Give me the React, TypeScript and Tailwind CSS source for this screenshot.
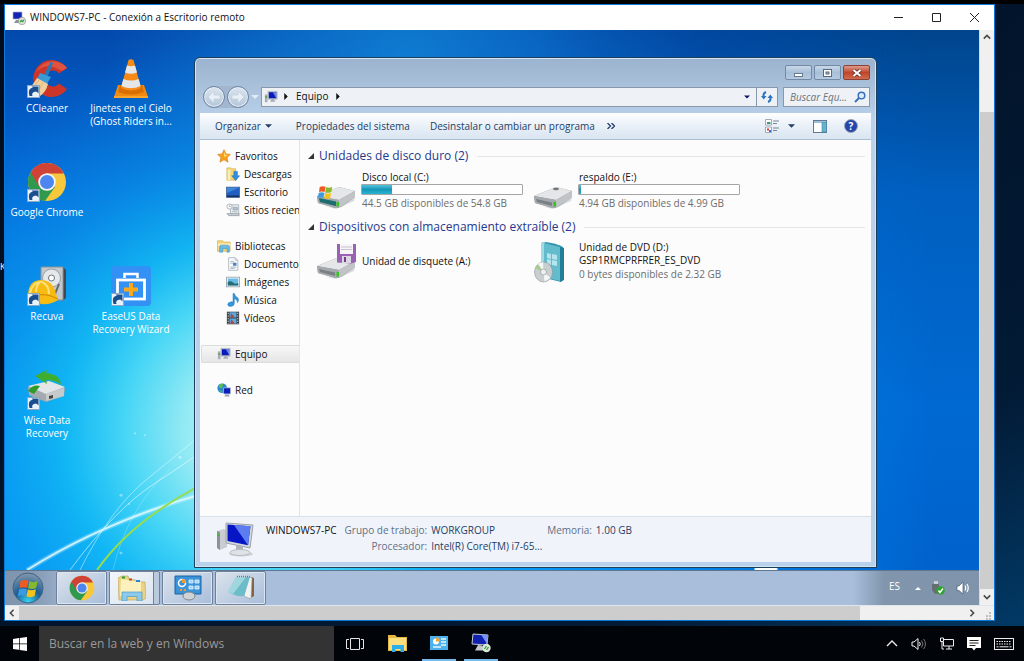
import React from "react";

type IconProps = { className?: string };

const ShortcutMark = () => (
  <g>
    <rect x="0.5" y="27.5" width="12" height="12" fill="#e9f2fb" stroke="#8da9c2" />
    <path d="M2.500 38c-1.500-5.500 0-8 3.500-8l-1.500-1.500h7v7L9.800 33.800c-3.500-.5-5.300 1.200-4.300 4.200z" fill="#1b4e8c" />
  </g>
);

const ChromeShapes = () => (
  <g>
    <circle cx="20" cy="20" r="19" fill="#f7c83c" />
    <path d="M20 20 3.500 10.500A19 19 0 0 0 18 38.900L28 25z" fill="#2f9a4e" />
    <path d="M20 11.500h16.900A19 19 0 0 0 3.600 10.400L12.500 25z" fill="#cf4236" />
    <circle cx="20" cy="20" r="8.800" fill="#f4f4f4" />
    <circle cx="20" cy="20" r="7" fill="#4c86ee" />
  </g>
);

const WinFlag = () => (
  <g>
    <path d="M1 3q4-2.500 8.500-.5L8 10Q4 8.500 0 10z" fill="#ee5a22" />
    <path d="M10.500 3q4 1.800 8.500-.3L17.500 10q-4 2-8.500.3z" fill="#86b92c" />
    <path d="M-.3 11.200q4-1.600 8 0L6.200 18.500q-4-1.800-8-.2z" fill="#3d9ae0" />
    <path d="M8.800 11.600q4 1.600 8.500-.3L15.800 18.800q-4 1.800-8.500-.1z" fill="#f8c21c" />
  </g>
);

const CCleanerIcon = () => (
  <svg viewBox="0 0 40 40" className="size-10">
    <path d="M40 10A18.500 18.500 0 1 0 40 31L32 25.500A8 8 0 1 1 32 15.500z" fill="#cd3528" />
    <path d="M40 10A18.500 18.500 0 0 0 9 14q10-11 26-1z" fill="#e05341" />
    <path d="m23.500 4 2.500 1-6 15-4-1z" fill="#2a78b8" />
    <path d="m13 15 11 4-4 7-10-5z" fill="#3a9ad6" />
    <path d="M10 20 4 29l9 9q6-4 8-12z" fill="#f1cf9c" />
    <path d="m12 22-6 8m10-6-5 11" stroke="#e0b57a" fill="none" />
    <ShortcutMark />
  </svg>
);

const ConeIcon = () => (
  <svg viewBox="0 0 40 40" className="size-10">
    <path d="M7 27h26l4 12H3z" fill="#f08a10" />
    <path d="M9 27h22l2 7q-13 5-26 0z" fill="#d96f04" />
    <path d="M17.500 2q2.500-1.500 5 0l7.500 28q-10 5-20 0z" fill="#f58a16" />
    <path d="m16 7.500-2 7q6 2.500 12 0l-2-7q-4 1.500-8 0zM12.300 21l-1.900 7q9.500 4.500 19.200 0l-1.900-7q-7.700 3-15.400 0z" fill="#e4e6e8" />
    <path d="M3 38h34v2H3z" fill="#f9a52c" />
  </svg>
);

const ChromeIcon = () => (
  <svg viewBox="0 0 40 40" className="size-10">
    <ChromeShapes />
    <ShortcutMark />
  </svg>
);

const RecuvaIcon = () => (
  <svg viewBox="0 0 40 40" className="size-10">
    <path d="m36 1 3 3v28l-4 3z" fill="#42484d" />
    <path d="M14 1h22v33H14z" fill="#c3c8cc" stroke="#8b9197" />
    <circle cx="24.500" cy="12" r="9" fill="#e5e8eb" stroke="#999fa5" />
    <circle cx="24.500" cy="12" r="3" fill="#fff" stroke="#6d7278" />
    <path d="m32 18-4 10" stroke="#666" strokeWidth="2" />
    <path d="M1 28Q2 14 14 14t15 14l2 6q-7 5-17 4L1 31z" fill="#f7bb12" />
    <path d="M3 27Q5 17 13 16q-4 4-4 10m6-10q7 3 7 12" stroke="#fde27a" strokeWidth="2" fill="none" />
    <path d="M6 30q12-4 25 3" stroke="#cc8800" fill="none" />
    <ShortcutMark />
  </svg>
);

const EaseUsIcon = () => (
  <svg viewBox="0 0 40 40" className="size-10">
    <rect width="40" height="40" rx="4" fill="#3390f5" />
    <path d="M13.500 12V8h13v4" fill="none" stroke="#fff" strokeWidth="2.500" />
    <rect x="6.500" y="14" width="27" height="19" fill="none" stroke="#fff" strokeWidth="2.800" />
    <path d="M18 17h4v4.500h5v4h-5V30h-4v-4.500h-5v-4h5z" fill="#fba919" />
    <ShortcutMark />
  </svg>
);

const WiseIcon = () => (
  <svg viewBox="0 0 40 40" className="size-10">
    <path d="m1 17 22-5 15 6-1 8-18 6L2 25z" fill="#a4aaaf" />
    <path d="m1 16 21-5 16 6-19 7z" fill="#e2e6e9" />
    <path d="M19 24v7l18-5v-8z" fill="#c5cacd" />
    <path d="m22 26 4-1v3l-4 1z" fill="#444" />
    <path d="M8 6 20 0l-1 3q14 1 15 12-5-5-15-5l1 4z" fill="#3fae2d" />
    <path d="M1 21q5-7 12-5l-6 8z" fill="#2f9b28" />
    <ShortcutMark />
  </svg>
);

const Monitor = ({ className }: IconProps) => (
  <svg viewBox="0 0 16 16" className={className}>
    <path d="M1 5h3v9H1z" fill="#a9afb4" />
    <path d="M1.500 7h2v2h-2z" fill="#4ea34a" />
    <path d="M4.500 1.500h10.500v9H4.500z" fill="#c6ccd2" stroke="#9aa1a8" strokeWidth=".6" />
    <path d="M5.500 2.500H14v7H5.500z" fill="#0a1cb8" />
    <path d="M10 2.500h4v7z" fill="#6a86ea" />
    <path d="M8.500 10.500h3l1.500 3H7z" fill="#a7acb1" />
  </svg>
);

const BigMonitor = () => (
  <svg viewBox="0 0 38 36" className="h-9 w-[38px] shrink-0">
    <ellipse cx="25" cy="32" rx="12" ry="2.500" fill="#cdd3d9" />
    <path d="m1 9 7-2 3 2v16l-7 3-3-2z" fill="#c9cdd1" />
    <path d="m1 9 3 1v18l-3-2z" fill="#8c9297" />
    <path d="M1.500 12h2v2h-2z" fill="#41b436" />
    <path d="m10 1 27 2-3 23-24-5z" fill="#d2d8de" stroke="#9ba2aa" />
    <path d="m11.500 2.500 23 1.800-2.500 19-20.500-4.300z" fill="#0716c4" />
    <path d="m18 3 16.500 1.300-2.500 19z" fill="#5c7df0" />
    <path d="m20 23 7 1v5h-7z" fill="#aeb4b9" />
    <ellipse cx="24" cy="30.500" rx="10" ry="3" fill="#dfe3e6" stroke="#b8bdc2" />
  </svg>
);

const NetworkIcon = ({ className }: IconProps) => (
  <svg viewBox="0 0 16 16" className={className}>
    <circle cx="6" cy="6" r="5.500" fill="#2a86cf" />
    <path d="M2 3q3-3 5-2l-1 4-3 1zM2 8l4 1v2z" fill="#5fc046" />
    <path d="M7.500 5.500h8v7h-8z" fill="#0b1eb9" stroke="#c3cad4" strokeWidth=".8" />
    <path d="M9.500 13h4l1 2.500h-6z" fill="#9da4ab" />
  </svg>
);

const StarIcon = ({ className }: IconProps) => (
  <svg viewBox="0 0 16 16" className={className}>
    <path d="m8 .8 2.200 4.800 5.100.6-3.800 3.500 1.100 5.300L8 12.300 3.400 15l1.100-5.300L.7 6.200l5.100-.6z" fill="#f9a01b" stroke="#dd7a12" strokeWidth=".7" />
    <path d="m8 3 1.500 3.500 3 .6-4.500 2z" fill="#ffdf6b" />
  </svg>
);

const DownloadsIcon = ({ className }: IconProps) => (
  <svg viewBox="0 0 16 16" className={className}>
    <path d="M1 1h5l1 1h4v13H1z" fill="#f4d676" stroke="#d1a843" strokeWidth=".7" />
    <path d="M2 3h3v12H2z" fill="#fbeeb4" />
    <path d="M9 5h4v5h2.500L11 15.500 6.500 10H9z" fill="#2f8fdd" stroke="#1c6bb5" strokeWidth=".6" />
  </svg>
);

const DeskIcon = ({ className }: IconProps) => (
  <svg viewBox="0 0 16 16" className={className}>
    <rect x=".5" y="2.500" width="15" height="11.500" fill="#1f5fc2" stroke="#4a6b94" />
    <path d="M1 3h14l-14 6z" fill="#4088dd" />
    <path d="M1 12h14v2H1z" fill="#16315c" />
  </svg>
);

const RecentIcon = ({ className }: IconProps) => (
  <svg viewBox="0 0 16 16" className={className}>
    <path d="M4.500 2h10v12h-9z" fill="#e8ecef" stroke="#9aa3ab" strokeWidth=".8" />
    <path d="M8 5h5v3H8zm-1 5h6" fill="#b1c4d5" stroke="#8d99a5" strokeWidth=".7" />
    <circle cx="4" cy="4" r="3" fill="#f6f8fa" stroke="#98a0a8" strokeWidth=".8" />
    <path d="M4 2.500V4h1.500M1 12h14v2.500H3z" fill="#c3cad0" stroke="#868e96" strokeWidth=".6" />
  </svg>
);

const LibraryIcon = ({ className }: IconProps) => (
  <svg viewBox="0 0 16 16" className={className}>
    <path d="M.5 2h6l1 1.500h7.500V14H.5z" fill="#f3d57b" stroke="#cfa94b" strokeWidth=".7" />
    <path d="M1 5h14v3H1z" fill="#fbedb3" />
    <path d="M3 14V9q0-2 2-2h7q2 0 2 2v6h-2.500v-4h-5v4H3z" fill="#69b9e4" stroke="#3d8fc2" strokeWidth=".6" />
  </svg>
);

const DocIcon = ({ className }: IconProps) => (
  <svg viewBox="0 0 16 16" className={className}>
    <path d="M3 .8h7.500l3 3v11.400H3z" fill="#fafbfc" stroke="#9aa4ae" strokeWidth=".8" />
    <path d="M10.500.8v3h3" fill="#d5dce3" stroke="#9aa4ae" strokeWidth=".6" />
    <path d="M5 5h4M5 7h3M5 11.500h7M5 13h5" stroke="#8f9ba7" strokeWidth=".8" />
    <path d="M8 6.500h4V10H8z" fill="#4c83c6" />
  </svg>
);

const ImageIcon = ({ className }: IconProps) => (
  <svg viewBox="0 0 16 16" className={className}>
    <rect x=".5" y="2.500" width="15" height="11" fill="#f8f9fa" stroke="#9aa4ae" />
    <path d="M2 4h12v8H2z" fill="#65bde8" />
    <path d="M2 8q3-2 6 .5t6 .5v3H2z" fill="#276c73" />
  </svg>
);

const MusicIcon = ({ className }: IconProps) => (
  <svg viewBox="0 0 16 16" className={className}>
    <path d="M8 .5h1.500Q10 4 14 6q1 3-1 5 .5-3.500-3.500-4.500V12q0 3-4 3.300-3.500 0-3.500-2.300T6 10q1-.2 2 .3z" fill="#3397dc" stroke="#1b74bb" strokeWidth=".5" />
  </svg>
);

const VideoIcon = ({ className }: IconProps) => (
  <svg viewBox="0 0 16 16" className={className}>
    <path d="M1 .8h14v14.400H1z" fill="#3b3f44" />
    <path d="M4 1.500h8v6H4zM4 8.500h8v6H4z" fill="#5fa6dc" />
    <path d="m6 2.500 4 5H5zm0 7 4 5H5z" fill="#a94632" />
    <path d="M2.500 2v13M13.500 2v13" stroke="#e2e5e7" strokeDasharray="1.500 1.500" />
  </svg>
);

const DriveBody = () => (
  <g>
    <path d="M4 34q16 6 35-8l-1 4-18 8z" fill="#d8dbdd" />
    <path d="m1 25 22-9 16 4v6l-14 10-5 1L2 32z" fill="#8c9194" />
    <path d="m1 25 22-9 16 4-16 9z" fill="#e4e6e8" />
    <path d="m1 25 22 4v8h-4L2 32z" fill="#a5aaae" />
    <path d="m3 28 16 3.500V35L4 31z" fill="#7a8084" />
    <path d="M23 29 39 20v6L23 37z" fill="#c0c4c7" />
    <path d="M20.500 31h2.600v4.500h-2.600z" fill="#36c321" />
  </g>
);

const SystemDriveIcon = () => (
  <svg viewBox="0 0 40 40" className="size-10 shrink-0">
    <DriveBody />
    <path d="m3 27 17 3.500V35L4 31z" fill="#1c6d70" />
    <g transform="translate(3 14) scale(.7)">
      <WinFlag />
    </g>
  </svg>
);

const DriveIcon = () => (
  <svg viewBox="0 0 40 40" className="size-10 shrink-0">
    <DriveBody />
    <ellipse cx="23" cy="18" rx="3" ry="1.200" fill="#777" />
  </svg>
);

const FloppyIcon = () => (
  <svg viewBox="0 0 40 40" className="size-10 shrink-0">
    <DriveBody />
    <path d="M21 3h19v18l-5 1.500-14-1z" fill="#9b62b4" />
    <path d="M24 3h13v10H24z" fill="#f5f5f7" />
    <path d="M25 6h11M25 8.500h11" stroke="#c9bfd0" />
    <path d="M26 15h9v7h-9z" fill="#dcd5e2" />
    <path d="M28 16h2v5h-2z" fill="#6f3e88" />
  </svg>
);

const DvdIcon = () => (
  <svg viewBox="0 0 40 44" className="h-11 w-10 shrink-0">
    <path d="m8 2 4-1q11 1 18 5l1 32-3 3-20-5z" fill="#3193ac" />
    <path d="m8 2 4-1v36l-4-1z" fill="#9edbe6" />
    <path d="m11 2 16 4v34l-16-4z" fill="#63bccb" />
    <path d="m27 6 4 1v32l-4 2z" fill="#1f7f9c" />
    <path d="m14 12 4 1v5l-4-1zm5 1 5 1v5l-5-1zm-5 5 4 1v5l-4-1zm5 1 5 1v5l-5-1z" fill="#b5e4ec" />
    <ellipse cx="10.500" cy="31" rx="9" ry="10" fill="#c9ced0" stroke="#8e9599" strokeWidth=".6" />
    <path d="M10.500 31 4 23l6-2zM10.500 31l7 6-6 3.500z" fill="#f5f7f8" />
    <path d="M10.500 31 2 27l3-4z" fill="#a9c991" />
    <circle cx="10.500" cy="31" r="3" fill="#eef1f2" stroke="#92999d" strokeWidth=".7" />
  </svg>
);

const Chevron = ({ d, className }: { d: string; className?: string }) => (
  <svg viewBox="0 0 10 10" className={className ?? "size-[10px]"}>
    <path d={d} fill="none" stroke="#4a4a4a" strokeWidth="2" />
  </svg>
);

const Caret = ({ className }: IconProps) => (
  <svg viewBox="0 0 8 4" className={className ?? "h-1 w-2"}>
    <path d="M0 0h8L4 4z" fill="currentColor" />
  </svg>
);

const RightCaret = () => (
  <svg viewBox="0 0 4 8" className="h-[7px] w-1">
    <path d="M0 0v8l4-4z" fill="#111" />
  </svg>
);

const Wallpaper = () => (
  <svg viewBox="0 0 974 541" preserveAspectRatio="none" className="absolute inset-0 size-full">
    <defs>
      <linearGradient id="wp-base" x1="0" y1="0" x2="0" y2="1">
        <stop offset="0" stopColor="#0349ac" />
        <stop offset=".3" stopColor="#036bda" />
        <stop offset=".65" stopColor="#0492f4" />
        <stop offset="1" stopColor="#0498fc" />
      </linearGradient>
      <radialGradient id="wp-glow" gradientUnits="userSpaceOnUse" cx="260" cy="400" r="400">
        <stop offset="0" stopColor="#c8f8f4" />
        <stop offset=".2" stopColor="#94eaf4" />
        <stop offset=".35" stopColor="#48d6f6" />
        <stop offset=".5" stopColor="#14bdf4" stopOpacity=".85" />
        <stop offset=".7" stopColor="#0c9cec" stopOpacity=".5" />
        <stop offset="1" stopColor="#0b86e4" stopOpacity="0" />
      </radialGradient>
      <radialGradient id="wp-top" gradientUnits="userSpaceOnUse" cx="400" cy="30" r="300">
        <stop offset="0" stopColor="#1080d4" stopOpacity=".9" />
        <stop offset="1" stopColor="#1080d4" stopOpacity="0" />
      </radialGradient>
      <linearGradient id="wp-right" x1="0" y1="0" x2="0" y2="1">
        <stop offset="0" stopColor="#00458c" />
        <stop offset=".3" stopColor="#005fbf" />
        <stop offset=".7" stopColor="#0069d2" />
        <stop offset="1" stopColor="#0062cc" />
      </linearGradient>
      <linearGradient id="wp-fade">
        <stop offset=".55" stopColor="#fff" stopOpacity="0" />
        <stop offset=".95" stopColor="#fff" />
      </linearGradient>
      <mask id="wp-mask">
        <rect width="974" height="541" fill="url(#wp-fade)" />
      </mask>
    </defs>
    <rect width="974" height="541" fill="url(#wp-base)" />
    <rect width="974" height="541" fill="url(#wp-top)" />
    <rect width="974" height="541" fill="url(#wp-glow)" />
    <rect width="974" height="541" fill="url(#wp-right)" mask="url(#wp-mask)" />
    <g fill="none" stroke="#e9fdff">
      <path d="M22 541Q100 492 200 464" strokeWidth="5" opacity=".25" />
      <path d="M22 541Q100 492 200 464" strokeWidth="2" opacity=".8" />
      <path d="M65 541Q110 480 150 454T200 419" opacity=".6" />
      <path d="M75 541Q105 480 142 450T200 402" opacity=".5" />
      <path d="M108 541Q122 480 165 440" opacity=".25" />
    </g>
    <path d="M92 541Q128 490 200 454" fill="none" stroke="#96dc50" strokeWidth="2" />
    <g fill="#fff" opacity=".4">
      <circle cx="116" cy="466" r="1.500" />
      <circle cx="130" cy="404" r="1" />
      <circle cx="140" cy="406" r="1" />
      <circle cx="116" cy="524" r="1.500" />
      <circle cx="124" cy="475" r="1" />
      <circle cx="175" cy="428" r="1.500" />
    </g>
    <ellipse cx="761" cy="540" rx="12" ry="2" fill="#fff" />
  </svg>
);

const desktopIcons = [
  { label: ["CCleaner"], icon: <CCleanerIcon />, place: "col-start-1" },
  { label: ["Jinetes en el Cielo", "(Ghost Riders in..."], icon: <ConeIcon />, place: "col-start-2" },
  { label: ["Google Chrome"], icon: <ChromeIcon />, place: "col-start-1" },
  { label: ["Recuva"], icon: <RecuvaIcon />, place: "col-start-1" },
  { label: ["EaseUS Data", "Recovery Wizard"], icon: <EaseUsIcon />, place: "col-start-2" },
  { label: ["Wise Data", "Recovery"], icon: <WiseIcon />, place: "col-start-1" },
];

const sidebar = [
  {
    title: "Favoritos",
    Icon: StarIcon,
    items: [
      { name: "Descargas", Icon: DownloadsIcon },
      { name: "Escritorio", Icon: DeskIcon },
      { name: "Sitios recientes", Icon: RecentIcon },
    ],
  },
  {
    title: "Bibliotecas",
    Icon: LibraryIcon,
    items: [
      { name: "Documentos", Icon: DocIcon },
      { name: "Imágenes", Icon: ImageIcon },
      { name: "Música", Icon: MusicIcon },
      { name: "Vídeos", Icon: VideoIcon },
    ],
  },
  { title: "Equipo", Icon: Monitor, items: [], selected: true },
  { title: "Red", Icon: NetworkIcon, items: [] },
];

const GroupHeader = ({ children }: { children: React.ReactNode }) => (
  <h2 className="flex h-4 items-center gap-[5px] text-[12px] leading-4 text-[#26388c]">
    <svg viewBox="0 0 6 6" className="size-[6px] shrink-0">
      <path d="M6 0v6H0z" fill="#333" />
    </svg>
    <span className="whitespace-nowrap">{children}</span>
    <span className="ml-1 h-px flex-1 bg-[#e3e6e9]" />
  </h2>
);

const Capacity = ({ used }: { used: number }) => (
  <div className="h-[11px] w-[162px] rounded-[1px] border border-[#a5a5a5] bg-white">
    <div
      className="h-full bg-linear-to-b from-[#4fc3dc] via-[#1597b8] to-[#25b4d2]"
      style={{ width: `${used}%` }}
    />
  </div>
);

const Explorer = () => (
  <section className="absolute top-[27px] left-[189px] flex h-[511px] w-[683px] flex-col rounded-t-[6px] border border-[#1d3f5c] bg-linear-to-b from-[#9bb3ce] via-[#b9d1ea] via-12% to-[#b9d1ea] px-[5px] pb-[5px] shadow-[inset_0_0_0_1px_#d3e5f5]">
    <div className="flex h-[22px] items-end justify-end gap-[2px] px-px">
      <button aria-label="Minimizar" className="flex h-[15px] w-[27px] items-center justify-center rounded-[2px] border border-[#7389a5] bg-linear-to-b from-[#c9d8e8] via-[#a8bfd8] to-[#b6cbe0]">
        <svg viewBox="0 0 9 4" className="mt-1 h-1 w-[9px]"><rect x=".5" y=".5" width="8" height="3" fill="#fff" stroke="#667a91" /></svg>
      </button>
      <button aria-label="Maximizar" className="flex h-[15px] w-[27px] items-center justify-center rounded-[2px] border border-[#7389a5] bg-linear-to-b from-[#c9d8e8] via-[#a8bfd8] to-[#b6cbe0]">
        <svg viewBox="0 0 9 8" className="h-2 w-[9px]"><rect x=".5" y=".5" width="8" height="7" fill="#fff" stroke="#56687d" /><rect x="3" y="3" width="3" height="2" fill="#a8bfd8" stroke="#56687d" /></svg>
      </button>
      <button aria-label="Cerrar" className="flex h-[15px] w-[27px] items-center justify-center rounded-[2px] border border-[#8f3f38] bg-linear-to-b from-[#dd9a8c] via-[#bf452b] to-[#cf6a4c]">
        <svg viewBox="0 0 10 8" className="h-2 w-[10px]"><path d="m1.500 1 7 6m0-6-7 6" stroke="#5d2a26" strokeWidth="3.500" /><path d="m1.500 1 7 6m0-6-7 6" stroke="#fff" strokeWidth="2" /></svg>
      </button>
    </div>

    <div className="flex h-[33px] items-center pr-px">
      <div className="ml-[3px] flex gap-[2px] rounded-full bg-[#a2b7cf]">
        {["Atrás", "Adelante"].map((name) => (
          <button key={name} aria-label={name} className="flex size-[22px] items-center justify-center rounded-full border border-[#7186a1] bg-linear-to-b from-[#dbe5ef] to-[#b4c6da] shadow-[inset_0_0_0_1px_#e7eff7]">
            <svg viewBox="0 0 14 14" className="size-[14px]">
              <path d={name === "Atrás" ? "M7 1 1 7l6 6v-4h6V5H7z" : "m7 1 6 6-6 6V9H1V5h6z"} fill="#e8eff6" stroke="#c4d2e0" strokeWidth=".8" />
            </svg>
          </button>
        ))}
      </div>
      <Caret className="mx-[2px] h-1 w-2 text-[#e3ecf5]" />
      <div className="flex h-5 flex-1 items-center border border-[#8798ab] bg-[#eef2f7] text-[10px]">
        <Monitor className="ml-[2px] size-[14px]" />
        <span className="ml-[6px]"><RightCaret /></span>
        <span className="mx-2 text-[#111]">Equipo</span>
        <RightCaret />
        <Caret className="mr-[6px] ml-auto h-1 w-[6px] text-[#0a1468]" />
        <button aria-label="Actualizar" className="flex h-full w-[21px] items-center justify-center border-l border-[#8798ab]">
          <svg viewBox="0 0 12 12" className="size-3"><path d="M5 1Q2 2 2.500 6M7 11q3-1 2.500-5" fill="none" stroke="#2b74c4" strokeWidth="2" /><path d="M0 5h5.500L2.700 8.500zM6.500 7h5.500L9.300 3.500z" fill="#2b74c4" /></svg>
        </button>
      </div>
      <label className="ml-[5px] flex h-5 w-[87px] items-center border border-[#8798ab] bg-[#eef2f7]">
        <input aria-label="Buscar Equipo" placeholder="Buscar Equ..." className="h-full w-[66px] pl-[6px] text-[10px] italic outline-none placeholder:text-[#6c737c]" />
        <svg viewBox="0 0 12 12" className="ml-1 size-3"><circle cx="7.500" cy="4.500" r="3.300" fill="#d9eaf8" stroke="#3a72b8" strokeWidth="1.500" /><path d="M5 7 1 11" stroke="#3a72b8" strokeWidth="2" /></svg>
      </label>
    </div>

    <div className="flex h-[27px] shrink-0 items-center border-b border-[#a9bfd5] bg-linear-to-b from-white via-[#e9f0f8] via-50% to-[#d9e5f1] text-[10px] text-[#243d66]">
      <button className="ml-[15px] flex items-center gap-1">
        Organizar <Caret className="h-1 w-[7px]" />
      </button>
      <button className="ml-6">Propiedades del sistema</button>
      <button className="ml-5">Desinstalar o cambiar un programa</button>
      <button aria-label="Más comandos" className="ml-3">
        <svg viewBox="0 0 8 6" className="h-[6px] w-2"><path d="m.5 0 3 3-3 3m4-6 3 3-3 3" fill="none" stroke="#243d66" strokeWidth="1.300" /></svg>
      </button>
      <button aria-label="Cambiar la vista" className="ml-auto flex items-center gap-2">
        <svg viewBox="0 0 15 14" className="h-[14px] w-[15px]">
          <path d="M.5.500h6v5.500h-6zM.5 8h6v5.500h-6z" fill="#fff" stroke="#8b98a7" strokeWidth=".8" />
          <path d="M2 3h3.500v2H2z" fill="#3c9a74" /><path d="M2 9.500h2v2H2z" fill="#d33" /><path d="M4 11h2v2H4z" fill="#3b6fc8" />
          <path d="M8 2h6M8 4.500h4M8 9h6M8 11.500h4" stroke="#7a8797" />
        </svg>
        <Caret className="h-1 w-[7px]" />
      </button>
      <button aria-label="Panel de vista previa" className="ml-[18px]">
        <svg viewBox="0 0 14 13" className="h-[13px] w-[14px]"><rect x=".5" y=".5" width="13" height="12" fill="#fff" stroke="#5d7b96" /><path d="M1 1h12v2H1z" fill="#9ec0d8" /><path d="M9 2.500h4.500V12H9z" fill="#68b2cd" stroke="#3f86a6" strokeWidth=".6" /></svg>
      </button>
      <button aria-label="Ayuda" className="mr-[13px] ml-[17px] flex size-[14px] items-center justify-center rounded-full border border-[#9da5b5] bg-[#2446a8] text-[10px] leading-none font-bold text-white">
        ?
      </button>
    </div>

    <div className="flex min-h-0 flex-1 bg-[#fcfcfc]">
      <nav className="flex w-[100px] shrink-0 flex-col gap-[18px] overflow-hidden border-r border-[#dde7f2] pt-[7px] pl-px text-[10px] text-[#111]">
        {sidebar.map(({ title, Icon, items, selected }) => (
          <ul key={title}>
            <li>
              <a
                href="#"
                className={
                  selected
                    ? "flex h-[18px] items-center gap-1 rounded-l-[2px] border border-r-0 border-[#dcdcdc] bg-linear-to-b from-[#f7f7f7] to-[#e6e6e6] pl-[15px]"
                    : "flex h-[18px] items-center gap-1 pl-4"
                }
              >
                <Icon className="size-[14px] shrink-0" />
                {title}
              </a>
            </li>
            {items.map((item) => (
              <li key={item.name}>
                <a href="#" className="flex h-[18px] items-center gap-1 pl-[25px] whitespace-nowrap">
                  <item.Icon className="size-[14px] shrink-0" />
                  {item.name}
                </a>
              </li>
            ))}
          </ul>
        ))}
      </nav>

      <main className="min-w-0 flex-1 pt-2 pr-[6px] pl-2 text-[10px] leading-[13px] text-[#111]">
        <GroupHeader>Unidades de disco duro (2)</GroupHeader>
        <div className="flex h-[55px] pt-[7px] pl-2">
          <div className="flex w-[217px] gap-[5px]">
            <SystemDriveIcon />
            <div>
              <p className="pl-px">Disco local (C:)</p>
              <Capacity used={19} />
              <p className="pt-[2px] pl-px text-[#6d6d6d]">44.5 GB disponibles de 54.8 GB</p>
            </div>
          </div>
          <div className="flex gap-[5px]">
            <DriveIcon />
            <div>
              <p className="pl-px">respaldo (E:)</p>
              <Capacity used={1} />
              <p className="pt-[2px] pl-px text-[#6d6d6d]">4.94 GB disponibles de 4.99 GB</p>
            </div>
          </div>
        </div>
        <GroupHeader>Dispositivos con almacenamiento extraíble (2)</GroupHeader>
        <div className="flex pt-[6px] pl-2">
          <div className="flex h-10 w-[217px] items-center gap-[5px]">
            <FloppyIcon />
            <p className="pl-px">Unidad de disquete (A:)</p>
          </div>
          <div className="flex gap-[5px]">
            <DvdIcon />
            <div className="pl-px">
              <p>Unidad de DVD (D:)</p>
              <p>GSP1RMCPRFRER_ES_DVD</p>
              <p className="pt-px text-[#6d6d6d]">0 bytes disponibles de 2.32 GB</p>
            </div>
          </div>
        </div>
      </main>
    </div>

    <footer className="flex h-[46px] shrink-0 border-t border-[#d5e1ec] bg-[#f0f4fa] pt-[5px] pl-4 text-[10px] leading-4 text-[#243d66]">
      <BigMonitor />
      <p className="ml-3 text-[#111]">WINDOWS7-PC</p>
      <dl className="ml-2 grid h-8 grid-cols-[auto_112px] gap-x-1">
        <dt className="text-right text-[#5f6f87]">Grupo de trabajo:</dt>
        <dd>WORKGROUP</dd>
        <dt className="text-right text-[#5f6f87]">Procesador:</dt>
        <dd className="whitespace-nowrap">Intel(R) Core(TM) i7-65...</dd>
      </dl>
      <dl className="ml-1 flex gap-1">
        <dt className="text-[#5f6f87]">Memoria:</dt>
        <dd>1.00 GB</dd>
      </dl>
    </footer>
  </section>
);

const taskButton =
  "flex h-[34px] w-[51px] items-center justify-center rounded-[2px] border border-[#6f8199] bg-linear-to-br from-[#dbe3ec] to-[#a9bedb] shadow-[inset_0_0_0_1px_#dce6f1]";

const RemoteTaskbar = () => (
  <div className="flex h-[35px] shrink-0 items-center border-t border-[#5f7791] bg-[#a8bedb]">
    <button aria-label="Inicio" className="flex h-full w-[51px] items-center bg-linear-to-r from-[#7f94ad] via-[#8397b0] to-[#95aac5] pl-[7px]">
      <svg viewBox="0 0 32 32" className="size-8">
        <defs>
          <radialGradient id="orb" cx=".5" cy=".95" r=".9">
            <stop offset="0" stopColor="#35d4f4" />
            <stop offset=".5" stopColor="#1b5e93" />
            <stop offset="1" stopColor="#7d93aa" />
          </radialGradient>
        </defs>
        <circle cx="16" cy="16" r="15" fill="url(#orb)" stroke="#3f6387" />
        <g transform="translate(7.500 6.500) scale(.95)"><WinFlag /></g>
      </svg>
    </button>
    <div className="flex gap-[2px]">
      <button aria-label="Google Chrome" className={taskButton}>
        <svg viewBox="0 0 40 40" className="size-[26px]"><ChromeShapes /></svg>
      </button>
      <button aria-label="Explorador" className="flex h-[34px] w-[51px] items-center rounded-[2px] border border-[#6f8199] bg-[#b9cadf]">
        <span className="flex h-full w-[44px] items-center justify-center border-r border-[#6f8199] bg-linear-to-br from-[#f3f6f9] to-[#dbe4ef]">
          <svg viewBox="0 0 28 26" className="h-[26px] w-7">
            <path d="M0 3 4 1h6l1 3 6 1 6 2h4l1 16-3 2H1z" fill="#ecd283" stroke="#b89f55" strokeWidth=".6" />
            <path d="m3 4 20 3v14H2z" fill="#fcf0bd" />
            <path d="M4 1.500h3v2H4z" fill="#25a033" /><path d="M11 3.500h3v2h-3z" fill="#d2432e" /><path d="M18 5h4v2h-4z" fill="#2c86d8" />
            <path d="M4 26V17h20v9h-5v-4.500H9V26z" fill="#8cc9ea" stroke="#4a9bcb" strokeWidth=".7" />
          </svg>
        </span>
      </button>
      <button aria-label="Panel de control" className={taskButton}>
        <svg viewBox="0 0 28 26" className="h-[26px] w-7">
          <path d="M1 1h26v18H1z" fill="#3b93d8" stroke="#1c62a6" />
          <circle cx="8" cy="8" r="3.500" fill="none" stroke="#fff" strokeWidth="1.500" /><path d="M8 8V4a4 4 0 0 1 4 4z" fill="#f39a2d" />
          <path d="M15 5h4v3h-4zm6 0h4v3h-4zm-6 6h4v3h-4zm6 0h4v3h-4z" fill="#9fd3f5" stroke="#e7f5ff" strokeWidth=".8" />
          <path d="M6 14h2v2H6zm4 0h2v2h-2z" fill="#f39a2d" />
          <ellipse cx="15" cy="21" rx="6" ry="4" fill="#cfd3d6" stroke="#7b858d" />
        </svg>
      </button>
      <button aria-label="Bloc de notas" className={taskButton}>
        <svg viewBox="0 0 28 26" className="h-[26px] w-7">
          <path d="m24 2 3 1v18l-5 3z" fill="#856042" />
          <path d="m22 2 3 1-1 21-7-3z" fill="#eef2f2" stroke="#9ba6a8" strokeWidth=".6" />
          <path d="M9 2h14l-6 19Q9 22 1 17z" fill="#6dbcc9" />
          <path d="M9 2h10L6 19l-5-2z" fill="#b7e3e8" opacity=".7" />
          <path d="M10 1.500h14" stroke="#6b777b" strokeWidth="1.500" strokeDasharray="1 1" />
        </svg>
      </button>
    </div>
    <div className="ml-auto flex h-full w-[126px] items-center bg-linear-to-r from-[#a8bedb] via-[#8195ac] via-25% to-[#7f93ab] pl-9 text-[10px] text-white">
      <span className="pb-1">ES</span>
      <svg viewBox="0 0 6 3" className="ml-[15px] h-[3px] w-[6px]"><path d="M0 3h6L3 0z" fill="#fff" /></svg>
      <svg viewBox="0 0 14 14" className="ml-[10px] size-[14px]">
        <path d="M3 0h4v3h1v6L6 13H4L1 9V3h2z" fill="#666d75" /><path d="M3 0h4v3H3z" fill="#c9ced3" />
        <circle cx="9.500" cy="9.500" r="4.300" fill="#2da32c" /><path d="m7.500 9.500 1.500 2 3-4" fill="none" stroke="#fff" strokeWidth="1.400" />
      </svg>
      <svg viewBox="0 0 14 14" className="ml-[11px] size-[14px]">
        <path d="M1 5h2l4-4v12L3 9.500H1z" fill="#fff" stroke="#4d5c6d" strokeWidth=".7" />
        <path d="M9 4.500q1.500 2.500 0 5M11 3q2.500 4 0 8" fill="none" stroke="#fff" strokeWidth="1.200" />
      </svg>
    </div>
  </div>
);

const RemoteWindow = () => (
  <section className="mr-[29px] ml-1 flex min-h-0 flex-1 flex-col border border-[#0a78d6] bg-[#f0f0f0]">
    <header className="flex h-[25px] shrink-0 items-center bg-white pr-3 pl-[7px]">
      <svg viewBox="0 0 14 14" className="size-[14px]">
        <path d="M1 1h9v7H1z" fill="#1423b5" stroke="#aab3bf" strokeWidth=".7" /><path d="M4 9h4v3H2z" fill="#8a9299" />
        <circle cx="10" cy="10" r="3.700" fill="#dfe5dd" stroke="#7f8a7e" strokeWidth=".6" /><path d="m8 11 2-2m0 2 2-2" stroke="#2f9c31" strokeWidth="1.200" />
      </svg>
      <h1 className="ml-1 text-[10px] text-[#111]">WINDOWS7-PC - Conexión a Escritorio remoto</h1>
      <div className="ml-auto flex items-center gap-[27px]">
        <button aria-label="Minimizar"><svg viewBox="0 0 11 11" className="size-[11px]"><path d="M1 5.500h9" stroke="#222" /></svg></button>
        <button aria-label="Maximizar"><svg viewBox="0 0 11 11" className="size-[11px]"><path d="M1.500 1.500h8v8h-8z" fill="none" stroke="#222" /></svg></button>
        <button aria-label="Cerrar" className="mr-[2px]"><svg viewBox="0 0 11 11" className="size-[11px]"><path d="m1 1 9 9m0-9-9 9" stroke="#222" /></svg></button>
      </div>
    </header>
    <div className="flex min-h-0 flex-1">
      <div className="flex min-w-0 flex-1 flex-col">
        <div className="relative min-h-0 flex-1 overflow-hidden">
          <Wallpaper />
          <div className="relative grid w-[168px] auto-rows-[104px] grid-cols-[84px_84px] pt-7 text-center text-[10px] leading-[13px] text-white text-shadow-[0_1px_2px_rgb(0_0_0_/_0.9)]">
            {desktopIcons.map((item) => (
              <button key={item.label[0]} className={`flex flex-col items-center gap-1 ${item.place}`}>
                {item.icon}
                <span className="whitespace-nowrap">
                  {item.label.map((line) => (
                    <span key={line} className="block">{line}</span>
                  ))}
                </span>
              </button>
            ))}
          </div>
          <Explorer />
        </div>
        <RemoteTaskbar />
      </div>
      <div className="flex w-[15px] shrink-0 flex-col items-center border-l border-[#cfdcea] bg-[#f0f0f0]">
        <Chevron d="M1 7l4-4 4 4" className="mt-[3px] size-2" />
        <div className="mt-[71px] w-full flex-1 bg-[#cdcdcd]" />
        <Chevron d="M1 3l4 4 4-4" className="my-1 size-2" />
      </div>
    </div>
    <div className="flex h-[15px] shrink-0 items-center border-t border-[#dfe5ec]">
      <Chevron d="M7 1 3 5l4 4" className="mx-[3px] size-2" />
      <div className="h-full w-[841px] bg-[#cdcdcd]" />
      <Chevron d="m3 1 4 4-4 4" className="ml-auto size-2" />
      <svg viewBox="0 0 8 8" className="mr-[2px] ml-2 size-2 self-end">
        <path d="M5 0h2v2H5zM5 3h2v2H5zM5 6h2v2H5zM2 3h2v2H2zM2 6h2v2H2z" fill="#bfbfbf" />
      </svg>
    </div>
  </section>
);

const HostTaskbar = () => (
  <footer className="flex h-[35px] shrink-0 items-center bg-[#010409]">
    <button aria-label="Inicio" className="flex h-full w-[39px] items-center justify-center">
      <svg viewBox="0 0 14 14" className="size-[14px]"><path d="m0 2 6-.9v5.500H0zm6.700-1L14 0v6.600H6.700zM0 7.300h6v5.500L0 12zm6.700 0H14V14l-7.300-1z" fill="#fff" /></svg>
    </button>
    <input aria-label="Buscar" placeholder="Buscar en la web y en Windows" className="h-full w-[295px] bg-[#333] px-[10px] text-[12px] text-white outline-none placeholder:text-[#999]" />
    <div className="flex h-full">
      <button aria-label="Vista de tareas" className="flex w-[42px] items-center justify-center">
        <svg viewBox="0 0 18 12" className="h-3 w-[18px]"><path d="M4.500.500h9v11h-9zM3 1.500H.5v9H3m12-9h2.500v9H15" fill="none" stroke="#e7e7e7" /></svg>
      </button>
      <button aria-label="Explorador de archivos" className="flex w-[42px] items-center justify-center">
        <svg viewBox="0 0 19 17" className="h-[17px] w-[19px]"><path d="M0 0h7l2 2h10v14H0z" fill="#e5b843" /><path d="M1 3h17v12H1z" fill="#fddf7f" /><path d="M4 17v-7h12v7h-3.500v-3h-5v3z" fill="#2caee8" /></svg>
      </button>
      <button aria-label="Panel de control" className="mx-1 flex w-[34px] items-center justify-center border-b-2 border-[#76b9ed]">
        <svg viewBox="0 0 18 14" className="h-[14px] w-[18px]"><path d="M0 0h18v14H0z" fill="#4db2ec" /><circle cx="6" cy="5.500" r="3" fill="#fff" /><path d="M6 5.500v-4A4 4 0 0 1 10 5.500z" fill="#f3a53a" /><path d="M11 3h5m-5 3h5m-5 3h5M3 11h8" stroke="#e5f6ff" strokeWidth="1.300" /></svg>
      </button>
      <button aria-label="Escritorio remoto" className="mx-1 flex w-[34px] items-center justify-center border-b-2 border-[#76b9ed]">
        <svg viewBox="0 0 20 20" className="size-5"><path d="m2 1 15 1-1 10L1 11z" fill="#1021b0" stroke="#c5cbd3" /><path d="m10 1.500 7 .5-1 9z" fill="#7594ef" /><path d="m7 12 4 .5 3 5H4z" fill="#c3c8cc" /><circle cx="15.500" cy="15" r="4.200" fill="#dfe6dc" /><path d="m13.500 16 2-3m0 4 2-3" stroke="#38a33a" strokeWidth="1.300" /></svg>
      </button>
    </div>
    <div className="ml-auto flex items-center gap-[13px] pr-[10px]">
      <svg viewBox="0 0 12 7" className="h-[7px] w-3"><path d="m1 6 5-5 5 5" fill="none" stroke="#eee" strokeWidth="1.300" /></svg>
      <svg viewBox="0 0 16 14" className="h-[14px] w-4"><path d="M1 5h2l4-3.500v11L3 9H1z" fill="none" stroke="#eee" /><path d="M8.500 5q1.500 2 0 4" fill="none" stroke="#eee" /><path d="M10.500 3.500q3 3.500 0 7M12.500 2q4 5 0 10" fill="none" stroke="#777" /></svg>
      <svg viewBox="0 0 14 13" className="h-[13px] w-[14px]"><path d="M4 2.500h9.500V9H3.500V5M6 12h6M9 9v3M.5 1h3v3.500h-3zM2 4.500V12h2" fill="none" stroke="#eee" /></svg>
      <svg viewBox="0 0 14 14" className="size-[14px]"><path d="M0 0h14v11H9l-2 2.500L5 11H0z" fill="#fff" /><path d="M2.500 3.500h9m-9 2.500h9m-9 2.500h6" stroke="#222" /></svg>
      <svg viewBox="0 0 20 12" className="h-3 w-5"><rect x=".5" y=".5" width="19" height="11" fill="none" stroke="#eee" /><path d="M2.500 3.500h15m-15 2.500h15" stroke="#eee" strokeDasharray="1.500 1" /><path d="M2.500 8.800h2m1 0h9m1 0h2" stroke="#eee" /></svg>
    </div>
  </footer>
);

export default function App() {
  return (
    <div className="flex h-screen min-h-[600px] flex-col overflow-hidden bg-black font-['Open_Sans','Noto_Sans',sans-serif]">
      <div className="relative mt-1 flex min-h-0 flex-1 flex-col bg-linear-to-br from-[#020b1c] via-[#021a35] via-80% to-[#013a66] pb-[5px]">
        <span className="absolute top-[256px] left-0 w-1 overflow-hidden text-[9px] text-white">K</span>
        <RemoteWindow />
      </div>
      <HostTaskbar />
    </div>
  );
}
